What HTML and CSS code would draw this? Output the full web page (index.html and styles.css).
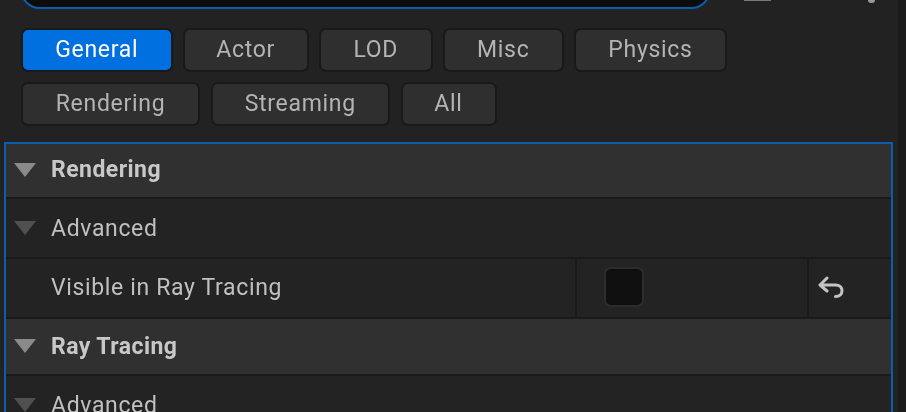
FILE: index.html
```html
<!DOCTYPE html>
<html lang="en">
<head>
  <meta charset="UTF-8" />
  <meta name="viewport" content="width=device-width, initial-scale=1" />
  <title>Details</title>
  <link rel="stylesheet" href="styles.css">
</head>
<body>

  <div class="top-row">
    <div class="search"></div>
    <div class="top-icon-a"></div>
    <div class="top-icon-b"></div>
  </div>

  <div class="tabs">
    <button class="tab tab-active w-general">General</button>
    <button class="tab w-actor">Actor</button>
    <button class="tab w-lod">LOD</button>
    <button class="tab w-misc">Misc</button>
    <button class="tab w-physics">Physics</button>
    <button class="tab w-rendering">Rendering</button>
    <button class="tab w-streaming">Streaming</button>
    <button class="tab w-all">All</button>
  </div>

  <div class="panel">
    <div class="row section">
      <svg class="arrow" viewBox="0 0 22 14"><path d="M0 0H22L11 14Z" /></svg>
      <span>Rendering</span>
    </div>
    <div class="row group">
      <svg class="arrow arrow-dim" viewBox="0 0 22 14"><path d="M0 0H22L11 14Z" /></svg>
      <span>Advanced</span>
    </div>
    <div class="row prop">
      <div class="prop-name">Visible in Ray Tracing</div>
      <div class="prop-value"><div class="checkbox"></div></div>
      <div class="prop-reset">
        <svg class="reset" viewBox="0 0 26 22"><path d="M9 2 2 9l7 6M2.500 9H17.500c4.200 0 6.500 2.600 6.500 5.800s-2.300 5.700-6.500 5.700" /></svg>
      </div>
    </div>
    <div class="row section section-2">
      <svg class="arrow" viewBox="0 0 22 14"><path d="M0 0H22L11 14Z" /></svg>
      <span>Ray Tracing</span>
    </div>
    <div class="row group">
      <svg class="arrow arrow-dim" viewBox="0 0 22 14"><path d="M0 0H22L11 14Z" /></svg>
      <span>Advanced</span>
    </div>
  </div>

</body>
</html>
```

FILE: styles.css
```css
html {
  background: #222222;
}
body {
  margin: 0;
  height: 412px;
  box-sizing: border-box;
  overflow: hidden;
  border-right: 8px solid #1c1c1c;
  background: #222222;
  font-family: Roboto, "Liberation Sans", sans-serif;
  color: #c0c0c0;
  filter: blur(0.5px);
}
.top-row {
  display: flex;
  height: 9px;
  overflow: hidden;
}
.search {
  flex: none;
  width: 691px;
  height: 40px;
  margin: -31px 0 0 20px;
  box-sizing: border-box;
  border: 2px solid #0e5cae;
  border-radius: 20px;
  background: #0c0c0c;
}
.top-icon-a {
  width: 27px;
  height: 1px;
  margin-left: 33px;
  background: #777;
}
.top-icon-b {
  width: 7px;
  height: 3px;
  margin-left: 97px;
  border-radius: 0 0 4px 4px;
  background: #999;
}
.tabs {
  display: flex;
  flex-wrap: wrap;
  gap: 10px 10.5px;
  width: 720px;
  margin: 19px 0 0 21px;
}
.tab {
  height: 44px;
  padding: 0 0 2px;
  box-sizing: border-box;
  border: 2px solid #191919;
  border-radius: 7px;
  background: #2f2f2f;
  color: #b4b4b4;
  font-family: inherit;
  font-size: 23px;
  letter-spacing: 0.7px;
}
.tab-active {
  background: #0070e0;
  color: #fff;
}
.w-general { width: 151.5px; }
.w-actor { width: 125.5px; }
.w-lod { width: 113.5px; }
.w-misc { width: 120.5px; }
.w-physics { width: 153px; }
.w-rendering { width: 179px; }
.w-streaming { width: 179.5px; }
.w-all { width: 96px; }
.panel {
  width: 885px;
  margin: 16px 0 0 4px;
  border: solid #0e5cae;
  border-width: 2px 2px 0 2px;
}
.row {
  display: flex;
  align-items: center;
  box-sizing: border-box;
  border-bottom: 2px solid #1a1a1a;
  font-size: 23px;
  letter-spacing: 0.65px;
}
.section {
  height: 55px;
  padding-bottom: 2px;
  background: #303030;
  font-weight: 700;
  letter-spacing: 0.45px;
  color: #c8c8c8;
}
.section-2 {
  height: 57px;
  padding-bottom: 1px;
}
.group {
  height: 60px;
  background: #232323;
}
.arrow {
  flex: none;
  width: 22px;
  height: 14px;
  margin: 0 15px 0 8px;
  fill: #8a8a8a;
}
.arrow-dim {
  fill: #505050;
}
.prop {
  height: 60px;
  align-items: stretch;
  background: #232323;
}
.prop-name {
  flex: none;
  display: flex;
  align-items: center;
  box-sizing: border-box;
  width: 571px;
  padding: 0 0 2px 45px;
  border-right: 2px solid #1a1a1a;
}
.prop-value {
  flex: none;
  display: flex;
  align-items: center;
  box-sizing: border-box;
  width: 232px;
  padding: 0 0 3px 27px;
  border-right: 2px solid #1a1a1a;
}
.checkbox {
  width: 40px;
  height: 40px;
  box-sizing: border-box;
  border: 2px solid #2c2c2c;
  border-radius: 7px;
  background: #0f0f0f;
}
.prop-reset {
  display: flex;
  align-items: center;
  padding: 0 0 2px 9px;
}
.reset {
  width: 26px;
  height: 22px;
  fill: none;
  stroke: #c4c4c4;
  stroke-width: 3;
  stroke-linecap: round;
  stroke-linejoin: round;
}
```
